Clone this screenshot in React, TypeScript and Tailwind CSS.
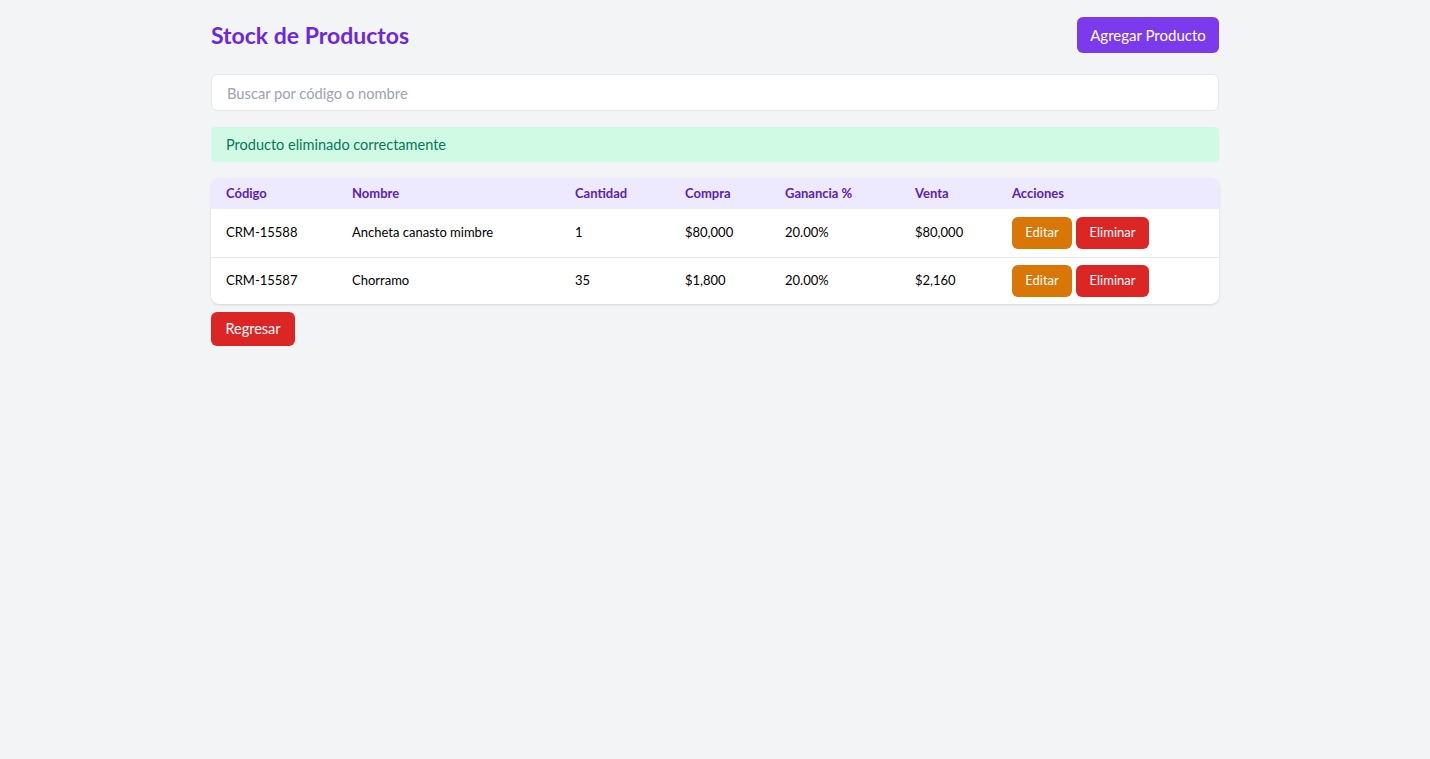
import React from "react";

const PRODUCTS = [
  { code: "CRM-15588", name: "Ancheta canasto mimbre", qty: "1", buy: "$80,000", margin: "20.00%", sell: "$80,000" },
  { code: "CRM-15587", name: "Chorramo", qty: "35", buy: "$1,800", margin: "20.00%", sell: "$2,160" },
];

export default function App() {
  return (
    <div className="min-h-screen bg-[#f3f4f6] font-['Segoe_UI','Lato',sans-serif]">
      <div className="mx-auto w-[1008px] pt-[17px]">
        <div className="flex items-center justify-between mb-[21px]">
          <h1 className="text-[23px] font-bold text-[#6d28d9]">Stock de Productos</h1>
          <button className="h-9 w-[142px] rounded-md bg-[#7c3aed] text-white text-[15px]">
            Agregar Producto
          </button>
        </div>

        <input
          className="w-full h-[37px] px-[15px] rounded-md border border-[#e5e7eb] bg-white text-[14.7px] placeholder:text-[#9ca3af] outline-none mb-4"
          placeholder="Buscar por código o nombre"
        />

        <div className="h-[35px] flex items-center px-[15px] rounded bg-[#d1fae5] text-[#047857] text-[14.5px] mb-4">
          Producto eliminado correctamente
        </div>

        <div className="bg-white rounded-lg shadow overflow-hidden">
          <table className="w-full text-left text-[13px] border-collapse">
            <thead className="bg-[#ede9fe] text-[#5b21b6]">
              <tr className="h-[31px]">
                <th className="pl-[15px] w-[141px] font-bold">Código</th>
                <th className="w-[223px] font-bold">Nombre</th>
                <th className="w-[110px] font-bold">Cantidad</th>
                <th className="w-[100px] font-bold">Compra</th>
                <th className="w-[130px] font-bold">Ganancia %</th>
                <th className="w-[97px] font-bold">Venta</th>
                <th className="font-bold">Acciones</th>
              </tr>
            </thead>
            <tbody className="text-black">
              {PRODUCTS.map((p, i) => (
                <tr key={p.code} className={i > 0 ? "h-[47px] border-t border-[#e5e7eb]" : "h-[48px]"}>
                  <td className="pl-[15px]">{p.code}</td>
                  <td>{p.name}</td>
                  <td>{p.qty}</td>
                  <td>{p.buy}</td>
                  <td>{p.margin}</td>
                  <td>{p.sell}</td>
                  <td>
                    <div className="flex gap-1">
                      <button className="w-[60px] h-8 rounded-md bg-[#d97706] text-white text-[13px]">Editar</button>
                      <button className="w-[73px] h-8 rounded-md bg-[#dc2626] text-white text-[13px]">Eliminar</button>
                    </div>
                  </td>
                </tr>
              ))}
            </tbody>
          </table>
        </div>

        <button className="mt-2 w-[84px] h-[34px] rounded-md bg-[#dc2626] text-white text-[14.5px]">
          Regresar
        </button>
      </div>
    </div>
  );
}
